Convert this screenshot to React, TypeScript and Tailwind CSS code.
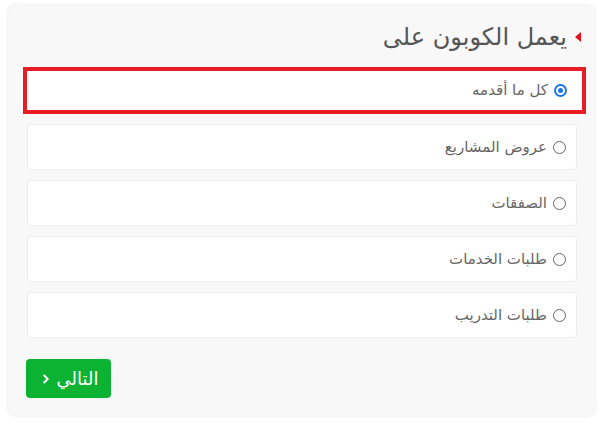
import React, { useState } from 'react';
import { ChevronRight } from 'lucide-react';

const OPTIONS = ['كل ما أقدمه', 'عروض المشاريع', 'الصفقات', 'طلبات الخدمات', 'طلبات التدريب'];

export default function App() {
  const [selected, setSelected] = useState(0);

  return (
    <div className="w-[600px] h-[425px] bg-white pt-[5px] pl-2" style={{ fontFamily: '"DejaVu Sans", sans-serif' }}>
      <div dir="rtl" className="w-[587px] h-[411px] bg-[#f8f8f8] rounded-lg shadow-[0_0_3px_rgba(0,0,0,0.12)] pr-[18px] pl-[19px] pt-[18px]">
        {/* Title */}
        <div className="flex items-center gap-2 h-[28px] mr-[-4px]">
          <span className="w-0 h-0 border-y-[5px] border-y-transparent border-r-[6px] border-r-[#e3101b]" />
          <h2 className="text-[24px] text-[#555] leading-none">يعمل الكوبون على</h2>
        </div>

        {/* Options */}
        <div className="flex flex-col gap-[10px] mt-[16px]">
          {OPTIONS.map((opt, i) => (
            <label
              key={opt}
              onClick={() => setSelected(i)}
              className={
                i === 0
                  ? 'flex items-center gap-[6px] h-[47px] bg-white border-4 border-[#e81c24] mr-[-9px] ml-[-4px] pr-[15px] cursor-pointer'
                  : 'flex items-center gap-[6px] h-[46px] bg-white border border-[#ececec] rounded pr-[10px] cursor-pointer'
              }
            >
              {selected === i ? (
                <span className="w-[13px] h-[13px] rounded-full border-2 border-[#1a73e8] flex items-center justify-center">
                  <span className="w-[5px] h-[5px] rounded-full bg-[#1a73e8]" />
                </span>
              ) : (
                <span className="w-[13px] h-[13px] rounded-full border-[1.5px] border-[#666]" />
              )}
              <span className="text-[15px] text-[#666]">{opt}</span>
            </label>
          ))}
        </div>

        {/* Next button */}
        <div className="flex justify-end mt-[21px] ml-[-1px]">
          <button className="w-[85px] h-[39px] rounded bg-[#0cb332] text-white flex items-center justify-center gap-[4px]">
            <span className="text-[18px]">التالي</span>
            <ChevronRight size={14} strokeWidth={3.5} className="mt-[1px]" />
          </button>
        </div>
      </div>
    </div>
  );
}
